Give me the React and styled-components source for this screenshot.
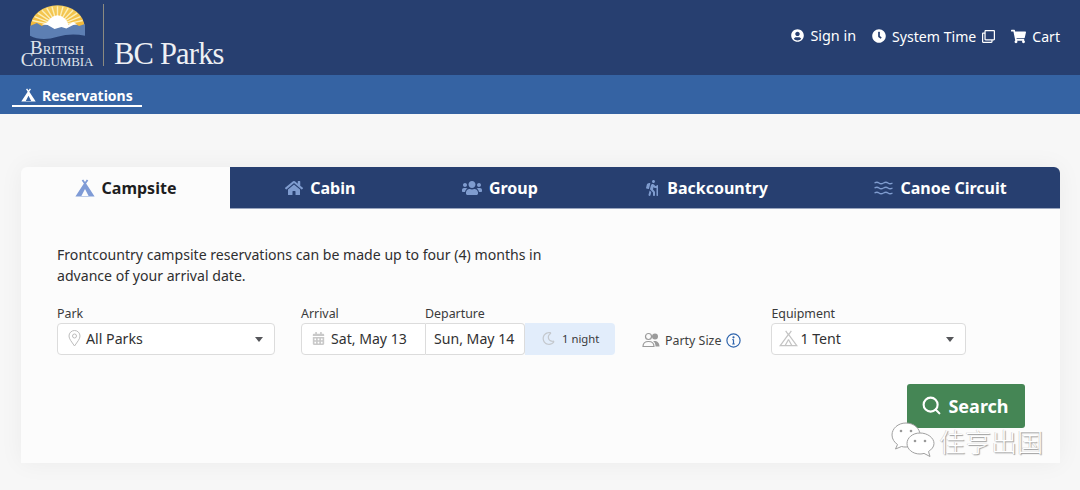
import React from 'react';
import styled, { createGlobalStyle } from 'styled-components';
import {
  FaHome,
  FaUsers,
  FaHiking,
  FaUserCircle,
  FaClock,
  FaRegClone,
  FaShoppingCart,
  FaCalendarAlt,
  FaRegMoon,
} from 'react-icons/fa';
import { LuSearch } from 'react-icons/lu';

const GlobalStyle = createGlobalStyle`
  html, body {
    margin: 0;
    padding: 0;
    background: #f7f7f7;
    font-family: "Noto Sans", "Open Sans", sans-serif;
    color: #313132;
    overflow: hidden;
  }
  * { box-sizing: border-box; }
`;

const Page = styled.div`
  position: relative;
  width: 1080px;
  height: 490px;
  overflow: hidden;
  background: linear-gradient(180deg, #f0f0f0 0, #f7f7f7 60px, #f7f7f7 100%);
`;

const Header = styled.header`
  height: 75px;
  background: #273f70;
  display: flex;
  align-items: flex-start;
  justify-content: space-between;
  padding: 4px 20px 0 21px;
`;

const Logo = styled.div`
  display: flex;
  align-items: flex-start;
`;

const Crest = styled.div`
  width: 72px;
  display: flex;
  flex-direction: column;
  align-items: center;
`;

const CrestWords = styled.div`
  font-family: "Liberation Serif", serif;
  font-size: 19px;
  line-height: 12px;
  letter-spacing: -0.1px;
  color: #dfe3ec;
  text-align: center;
  margin-top: 2px;
  font-variant: small-caps;
  white-space: nowrap;
`;

const LogoRule = styled.div`
  width: 1px;
  height: 62px;
  background: #8b8a80;
  margin: 0 10px 0 10px;
`;

const LogoName = styled.div`
  font-family: "Liberation Serif", serif;
  font-size: 30.5px;
  line-height: 34px;
  color: #eef0f4;
  margin-top: 33px;
  letter-spacing: -0.8px;
  white-space: nowrap;
`;

const TopLinks = styled.nav`
  display: flex;
  align-items: center;
  gap: 16px;
  height: 64px;
  color: #fff;
  font-size: 14px;
`;

const TopLink = styled.span`
  display: inline-flex;
  align-items: center;
  gap: 6px;
  white-space: nowrap;
  position: relative;
  top: ${(p) => (p.$raised ? '-1px' : '0')};
  font-size: ${(p) => (p.$raised ? '14.4px' : '14.1px')};
  svg { flex: none; }
`;

const SubNav = styled.div`
  height: 39px;
  background: #3563a3;
  padding-left: 12px;
  display: flex;
  align-items: flex-start;
`;

const SubNavItem = styled.div`
  width: 130px;
  height: 32px;
  border-bottom: 2px solid #fff;
  display: flex;
  align-items: center;
  gap: 6px;
  padding: 10px 0 0 9px;
  color: #fff;
  font-weight: 700;
  font-size: 14px;
`;

const Card = styled.section`
  width: 1039px;
  height: 296px;
  margin: 53px 0 0 21px;
  background: #fcfcfc;
  border-radius: 6px 6px 0 0;
  box-shadow: 0 0 24px rgba(0, 0, 0, 0.05);
  display: flex;
  flex-direction: column;
`;

const Tabs = styled.div`
  height: 42px;
  display: flex;
  border-radius: 6px 6px 0 0;
  overflow: hidden;
`;

const ActiveTab = styled.div`
  width: 209px;
  display: flex;
  align-items: center;
  justify-content: center;
  gap: 7px;
  font-size: 16px;
  font-weight: 700;
  color: #1e1e1f;
  svg { flex: none; }
`;

const TabList = styled.div`
  flex: 1;
  display: flex;
  align-items: center;
  justify-content: space-around;
  background: #273f70;
  border-bottom: 1px solid #9aa6bf;
  padding-left: 2px;
`;

const Tab = styled.div`
  display: flex;
  align-items: center;
  gap: 7px;
  font-size: 16px;
  font-weight: 700;
  color: #fff;
  padding-top: 1px;
  svg { color: #7f9ccf; flex: none; }
`;

const CardBody = styled.div`
  flex: 1;
  padding: 35px 35px 0 36px;
  display: flex;
  flex-direction: column;
`;

const Intro = styled.p`
  margin: 0;
  width: 500px;
  font-size: 14.1px;
  line-height: 21px;
  color: #2f2f30;
`;

const Fields = styled.div`
  display: flex;
  align-items: flex-start;
  margin-top: 19px;
`;

const Field = styled.div`
  display: flex;
  flex-direction: column;
  width: ${(p) => p.$width}px;
  margin-right: ${(p) => p.$gap || 0}px;
`;

const Label = styled.label`
  font-size: 12.4px;
  line-height: 18px;
  height: 18px;
  color: #3a3a3b;
`;

const Select = styled.div`
  height: 32px;
  background: #fff;
  border: 1px solid #dcdcdc;
  border-radius: 4px;
  display: flex;
  align-items: center;
  padding: 0 11px 2px ${(p) => p.$pad}px;
  gap: ${(p) => p.$gap}px;
  font-size: 14.2px;
  color: #313132;
  svg { flex: none; }
`;

const Caret = styled.span`
  margin-left: auto;
  width: 0;
  height: 0;
  border-left: 4.5px solid transparent;
  border-right: 4.5px solid transparent;
  border-top: 5px solid #55565a;
  position: relative;
  top: 1px;
`;

const DateLabels = styled.div`
  display: flex;
`;

const DateLabel = styled(Label)`
  width: ${(p) => p.$width}px;
`;

const DateRow = styled.div`
  display: flex;
  height: 32px;
`;

const DateCell = styled.div`
  width: ${(p) => p.$width}px;
  background: #fff;
  border: 1px solid #dcdcdc;
  border-left-width: ${(p) => (p.$first ? '1px' : '0')};
  border-radius: ${(p) => (p.$first ? '4px 0 0 4px' : '0 4px 4px 0')};
  display: flex;
  align-items: center;
  gap: 6px;
  padding: 0 0 2px ${(p) => (p.$first ? '10px' : '8px')};
  font-size: 14.1px;
  white-space: nowrap;
  svg { color: #c9c9c9; flex: none; }
`;

const Nights = styled.div`
  width: 90px;
  background: #e2edfb;
  border-radius: 0 4px 4px 0;
  display: flex;
  align-items: center;
  gap: 7px;
  padding: 0 0 2px 17px;
  font-size: 11.3px;
  color: #3a3a3b;
  svg { color: #c4c8cd; flex: none; }
`;

const PartySize = styled.div`
  display: flex;
  align-items: center;
  gap: 5px;
  height: 32px;
  margin: 18px 30px 0 27px;
  font-size: 12.4px;
  color: #3f3f40;
  white-space: nowrap;
  padding-top: 2px;
`;

const Actions = styled.div`
  display: flex;
  justify-content: flex-end;
  margin-top: 29px;
`;

const SearchButton = styled.button`
  width: 118px;
  height: 44px;
  background: #458655;
  border: none;
  border-radius: 3px;
  color: #fff;
  font-family: inherit;
  font-size: 18px;
  font-weight: 700;
  display: flex;
  align-items: center;
  justify-content: center;
  gap: 6px;
  padding: 0 2px 1px 0;
  cursor: pointer;
`;

const Watermark = styled.div`
  position: absolute;
  left: 891px;
  top: 421px;
  display: flex;
  align-items: center;
  gap: 4px;
  font-family: "Noto Sans CJK SC", sans-serif;
  font-size: 26px;
  font-weight: 300;
  line-height: 40px;
  color: #fff;
  text-shadow: 1px 1px 1px #9a9a9a, -0.5px -0.5px 0 #c8c8c8;
  white-space: nowrap;
`;

const rayAngles = [-72, -60, -48, -36, -24, -12, 0, 12, 24, 36, 48, 60, 72];

const BcSun = () => (
  <svg width="55" height="36" viewBox="0 0 56 36">
    <defs>
      <linearGradient id="sky" x1="0" y1="0" x2="0" y2="1">
        <stop offset="0" stopColor="#f5cf5f" />
        <stop offset="1" stopColor="#f1b22e" />
      </linearGradient>
    </defs>
    <path d="M0.5 23 A27.5 22 0 0 1 55.5 23 L55.5 26 L0.5 26 Z" fill="url(#sky)" />
    {rayAngles.map((a) => (
      <path
        key={a}
        d={`M28 22 L${28 + 27 * Math.sin((a * Math.PI) / 180)} ${23 - 21 * Math.cos((a * Math.PI) / 180)}`}
        stroke="#fbeeb8"
        strokeWidth="1.4"
      />
    ))}
    <path d="M16 23 Q19 12 28 11 Q37 12 40 23 Z" fill="#fff" />
    <path
      d="M0 22 L7 19 L12 22 L18 19 L25 24 L32 22 L37 24 L44 19 L50 22 L56 20 L56 32 Q42 29 28 33 Q12 38 0 32 Z"
      fill="#5d7fb3"
    />
    <path d="M12 20.5 L18 18 L25 22 L32 20.5 L37 22 L44 18 L48 20.5 L44 21 L37 24.5 L32 23 L25 25 L18 21 Z" fill="#fff" />
  </svg>
);

const TentIcon = ({ width = 20, height = 18, color = 'currentColor' }) => (
  <svg width={width} height={height} viewBox="0 0 20 18" fill={color}>
    <path
      fillRule="evenodd"
      d="M8.2 0.4 L10 3 L11.8 0.4 L13.3 1.4 L11.1 4.6 L19.6 17.6 L0.4 17.6 L8.9 4.6 L6.7 1.4 Z M10 10 L6.4 17 L13.6 17 Z"
    />
  </svg>
);

const TentOutline = () => (
  <svg width="19" height="17" viewBox="0 0 20 18" fill="none" stroke="#c4c4c4" strokeWidth="1.3">
    <path d="M7 1 L9.6 4.6 M13 1 L10.4 4.6" />
    <path d="M10 4.6 L18.8 16.5 L1.2 16.5 Z" />
    <path d="M10 10 L6.5 16.5 M10 10 L13.5 16.5" />
  </svg>
);

const PinIcon = () => (
  <svg width="13" height="17" viewBox="0 0 13 17" fill="none" stroke="#bdbdbd" strokeWidth="1">
    <path d="M6.5 16 C3.5 11.5 1 9 1 6 A5.5 5.5 0 0 1 12 6 C12 9 9.5 11.5 6.5 16 Z" />
    <circle cx="6.5" cy="6" r="2" />
  </svg>
);

const WavesIcon = () => (
  <svg width="19" height="14" viewBox="0 0 19 14" fill="none" stroke="#7f9ccf" strokeWidth="1.3">
    <path d="M0.5 2 Q3 0.5 5 2 T9.5 2 T14 2 T18.5 2" />
    <path d="M0.5 7 Q3 5.5 5 7 T9.5 7 T14 7 T18.5 7" />
    <path d="M0.5 12 Q3 10.5 5 12 T9.5 12 T14 12 T18.5 12" />
  </svg>
);

const PartyIcon = () => (
  <svg width="18" height="16" viewBox="0 0 18 16">
    <circle cx="6.5" cy="4.5" r="3" fill="none" stroke="#9b9b9b" strokeWidth="1.2" />
    <path d="M1 14.5 C1 10.5 3.5 9.5 6.5 9.5 C9.5 9.5 12 10.5 12 14.5 Z" fill="none" stroke="#9b9b9b" strokeWidth="1.2" />
    <circle cx="13" cy="4.5" r="3" fill="#9b9b9b" />
    <path d="M11 9 C15 8.5 17.5 10.5 17.5 14.5 L13.5 14.5 C13.5 12 12.8 10.3 11 9 Z" fill="#9b9b9b" />
  </svg>
);

const InfoIcon = () => (
  <svg width="15" height="15" viewBox="0 0 15 15" fill="none" stroke="#2f65ad" strokeWidth="1.2">
    <circle cx="7.5" cy="7.5" r="6.6" />
    <path d="M7.5 6.6 L7.5 11 M6.2 11 L8.8 11 M6.3 6.6 L7.5 6.6" />
    <circle cx="7.5" cy="4.3" r="0.5" fill="#2f65ad" />
  </svg>
);

const WeChatIcon = () => (
  <svg width="44" height="38" viewBox="0 0 44 38" fill="#fff" stroke="#a0a0a0" strokeWidth="1">
    <path d="M15 1 C7 1 1 6.5 1 13 C1 17 3.5 20.5 6.5 22.5 L4.5 27 L10.5 24.5 C12 25 13.5 25 15 25 C23 25 29 19.5 29 13 C29 6.5 23 1 15 1 Z" />
    <path d="M29 11 C21.5 11 16 15.8 16 21.5 C16 27.2 21.5 32 29 32 C30.5 32 31.5 31.8 33 31.4 L39 34.5 L37.5 29.5 C40.5 27.5 43 25 43 21.5 C43 15.8 36.5 11 29 11 Z" />
    <circle cx="10" cy="9" r="1.3" fill="#999" stroke="none" />
    <circle cx="20" cy="9" r="1.3" fill="#999" stroke="none" />
    <circle cx="24" cy="19" r="1.3" fill="#999" stroke="none" />
    <circle cx="34" cy="19" r="1.3" fill="#999" stroke="none" />
  </svg>
);

const tabs = [
  { label: 'Cabin', icon: <FaHome size={18} /> },
  { label: 'Group', icon: <FaUsers size={20} /> },
  { label: 'Backcountry', icon: <FaHiking size={16} /> },
  { label: 'Canoe Circuit', icon: <WavesIcon /> },
];

const App = () => (
  <Page>
    <GlobalStyle />
    <Header>
      <Logo>
        <Crest>
          <BcSun />
          <CrestWords>
            British
            <br />
            Columbia
          </CrestWords>
        </Crest>
        <LogoRule />
        <LogoName>BC Parks</LogoName>
      </Logo>
      <TopLinks>
        <TopLink $raised>
          <FaUserCircle size={13} />
          Sign in
        </TopLink>
        <TopLink>
          <FaClock size={14} />
          System Time
          <FaRegClone size={13} />
        </TopLink>
        <TopLink>
          <FaShoppingCart size={15} />
          Cart
        </TopLink>
      </TopLinks>
    </Header>
    <SubNav>
      <SubNavItem>
        <TentIcon width={15} height={14} color="#fff" />
        Reservations
      </SubNavItem>
    </SubNav>
    <Card>
      <Tabs>
        <ActiveTab>
          <TentIcon color="#7f9bd6" />
          Campsite
        </ActiveTab>
        <TabList>
          {tabs.map((tab) => (
            <Tab key={tab.label}>
              {tab.icon}
              {tab.label}
            </Tab>
          ))}
        </TabList>
      </Tabs>
      <CardBody>
        <Intro>
          Frontcountry campsite reservations can be made up to four (4) months in advance of your
          arrival date.
        </Intro>
        <Fields>
          <Field $width={218} $gap={26}>
            <Label>Park</Label>
            <Select $pad={10} $gap={5}>
              <PinIcon />
              All Parks
              <Caret />
            </Select>
          </Field>
          <Field $width={314}>
            <DateLabels>
              <DateLabel $width={124}>Arrival</DateLabel>
              <DateLabel $width={100}>Departure</DateLabel>
            </DateLabels>
            <DateRow>
              <DateCell $first $width={125}>
                <FaCalendarAlt size={13} />
                Sat, May 13
              </DateCell>
              <DateCell $width={99}>Sun, May 14</DateCell>
              <Nights>
                <FaRegMoon size={13} />1 night
              </Nights>
            </DateRow>
          </Field>
          <PartySize>
            <PartyIcon />
            Party Size
            <InfoIcon />
          </PartySize>
          <Field $width={195}>
            <Label>Equipment</Label>
            <Select $pad={7} $gap={2}>
              <TentOutline />
              1 Tent
              <Caret />
            </Select>
          </Field>
        </Fields>
        <Actions>
          <SearchButton>
            <LuSearch size={21} strokeWidth={2.4} />
            Search
          </SearchButton>
        </Actions>
      </CardBody>
    </Card>
    <Watermark>
      <WeChatIcon />
      佳亨出国
    </Watermark>
  </Page>
);

export default App;
